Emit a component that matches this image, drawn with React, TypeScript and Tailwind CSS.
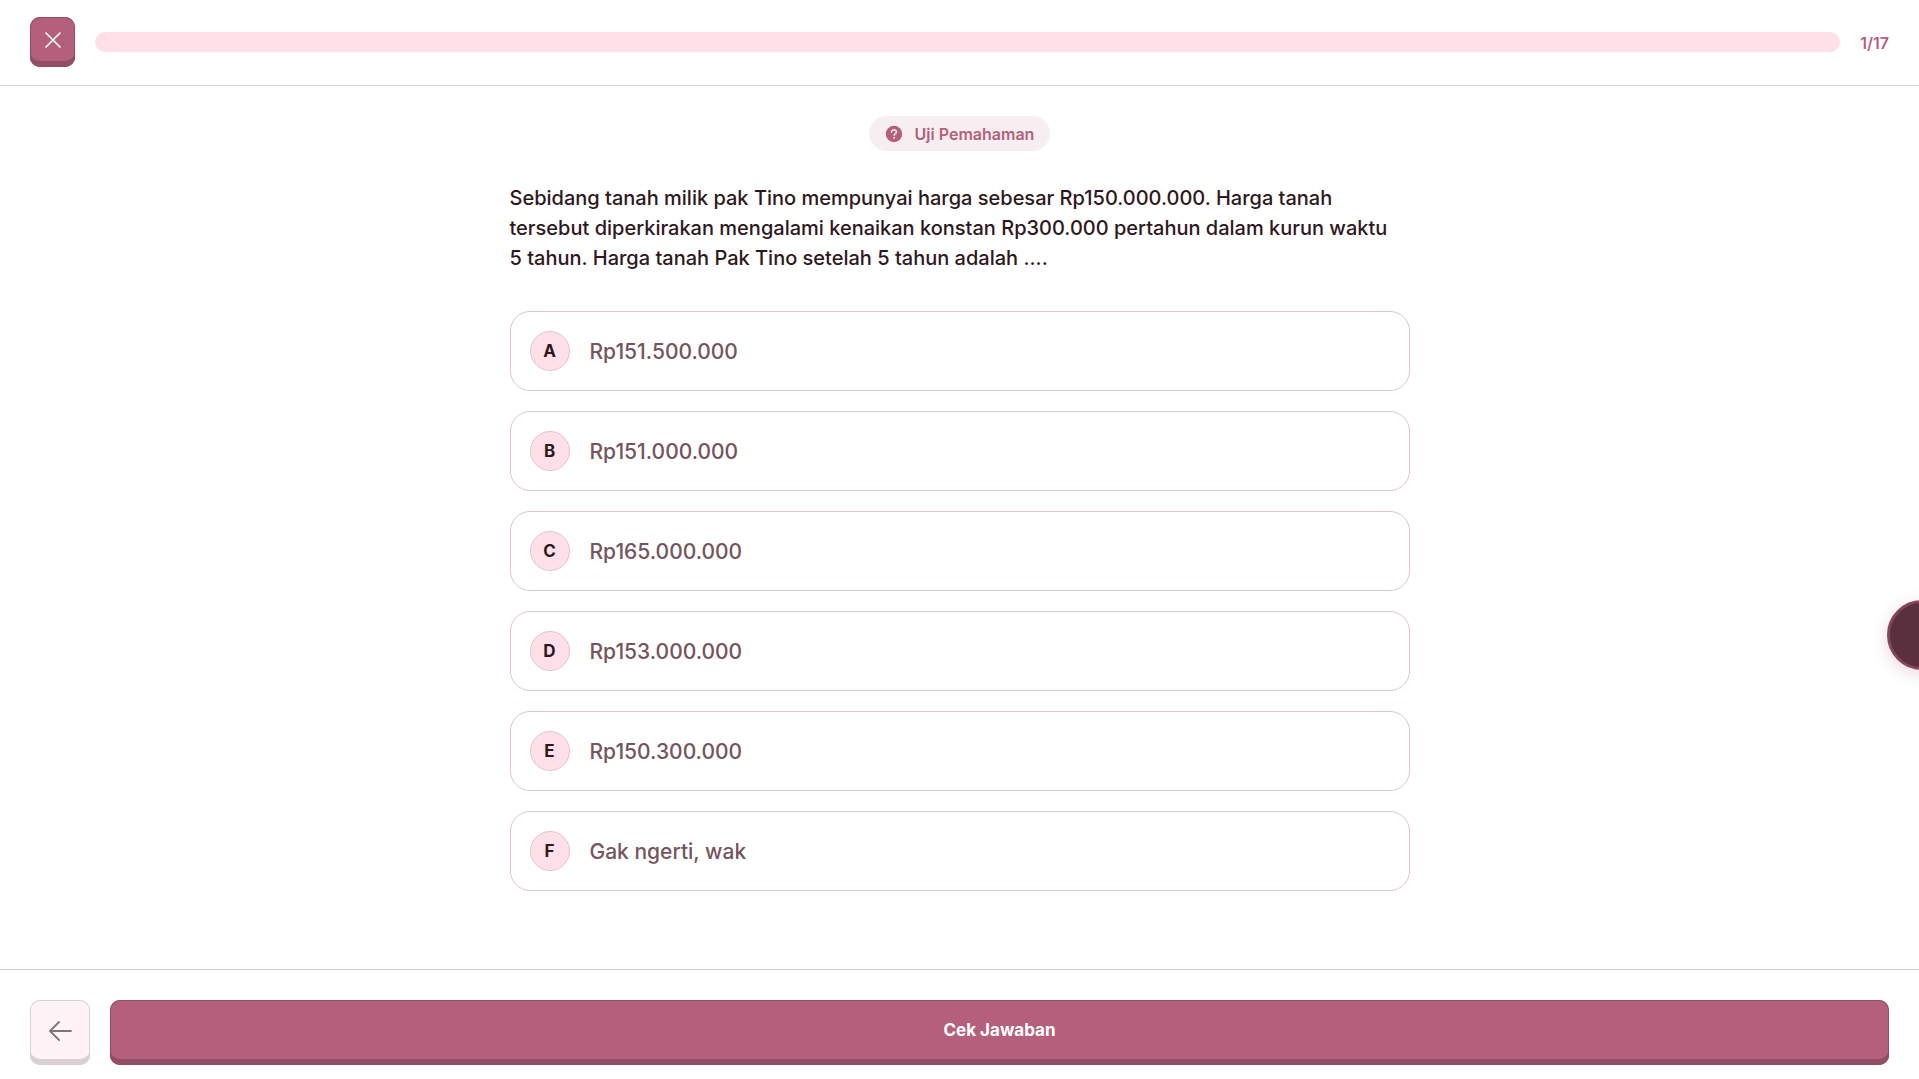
import { useState } from "react";

const options = [
  { id: "A", text: "Rp151.500.000" },
  { id: "B", text: "Rp151.000.000" },
  { id: "C", text: "Rp165.000.000" },
  { id: "D", text: "Rp153.000.000" },
  { id: "E", text: "Rp150.300.000" },
  { id: "F", text: "Gak ngerti, wak" },
];

function Header() {
  return (
    <header className="flex items-center gap-5 border-b border-[#d3d3d3] px-[30px] pt-[17px] pb-[18px]">
      <button
        type="button"
        aria-label="Tutup"
        className="flex h-[50px] w-[45px] shrink-0 items-center justify-center rounded-[10px] bg-[#b45f7b] pb-[5px] shadow-[inset_0_-6px_0_#914e64,inset_0_0_0_1px_#914e64]"
      >
        <svg width="16" height="16" viewBox="0 0 16 16" fill="none" stroke="#fff" strokeWidth="1.6" strokeLinecap="round" aria-hidden="true">
          <path d="M1 1 15 15M15 1 1 15" />
        </svg>
      </button>
      <div role="progressbar" aria-label="Kemajuan" aria-valuemin={0} aria-valuemax={17} aria-valuenow={0} className="h-5 flex-1 rounded-full bg-[#ffe0e8]" />
      <span className="pt-0.5 text-base leading-5 font-semibold text-[#b45f7b]">1/17</span>
    </header>
  );
}

function Topic() {
  return (
    <div className="flex h-[35px] items-center gap-3 rounded-full bg-[#f7eef1] px-4 text-[#b45f7b]">
      <svg width="18" height="18" viewBox="0 0 18 18" aria-hidden="true">
        <circle cx="9" cy="9" r="8.2" fill="currentColor" />
        <path d="M6.5 7.2C6.6 5.5 7.7 4.800 9 4.800s2.500.8 2.500 2.200c0 1.700-2.400 1.700-2.400 3.300" fill="none" stroke="#fff" strokeWidth="1.3" strokeLinecap="round" />
        <circle cx="9.1" cy="12.8" r=".9" fill="#fff" />
      </svg>
      <span className="text-base leading-5 font-semibold">Uji Pemahaman</span>
    </div>
  );
}

function Option({ id, text, checked, onSelect }: { id: string; text: string; checked: boolean; onSelect: () => void }) {
  return (
    <label className="flex h-20 cursor-pointer items-center gap-5 rounded-[20px] border border-[#e2c4ce] px-[19px] has-checked:bg-[#fff2f6]">
      <input type="radio" name="jawaban" value={id} checked={checked} onChange={onSelect} className="sr-only" />
      <span className="flex size-10 shrink-0 items-center justify-center rounded-full border border-[#e2c4ce] bg-[#ffe0e8] pt-0.5 text-[17px] font-bold text-[#2e1820]">
        {id}
      </span>
      <span className="pt-0.5 text-[21px] font-medium text-[#74545e]">{text}</span>
    </label>
  );
}

export default function App() {
  const [answer, setAnswer] = useState("");

  return (
    <div className="flex min-h-screen flex-col bg-white font-['Inter',sans-serif]">
      <Header />
      <main className="mx-auto flex w-full max-w-[900px] flex-1 flex-col items-center pt-[30px] pb-10">
        <Topic />
        <form id="soal" className="mt-8 w-full" onSubmit={(event) => event.preventDefault()}>
          <fieldset>
            <legend className="mb-[38px] text-xl leading-[30px] font-medium text-[#2e1820]">
              Sebidang tanah milik pak Tino mempunyai harga sebesar Rp150.000.000. Harga tanah tersebut diperkirakan mengalami kenaikan konstan Rp300.000 pertahun dalam kurun waktu 5&nbsp;tahun. Harga tanah Pak Tino setelah 5 tahun adalah ....
            </legend>
            <div className="flex flex-col gap-5">
              {options.map((option) => (
                <Option key={option.id} {...option} checked={answer === option.id} onSelect={() => setAnswer(option.id)} />
              ))}
            </div>
          </fieldset>
        </form>
      </main>
      <footer className="flex gap-5 border-t border-[#e2c4ce] px-[30px] pt-[30px] pb-[14px]">
        <button
          type="button"
          aria-label="Kembali"
          className="flex h-[65px] w-[60px] shrink-0 items-center justify-center rounded-[10px] bg-[#fff3f7] pb-1 shadow-[inset_0_-6px_0_#dad0d4,inset_0_0_0_1px_#dad0d4]"
        >
          <svg width="24" height="20" viewBox="0 0 24 20" fill="none" stroke="#7d7779" strokeWidth="1.8" strokeLinecap="round" strokeLinejoin="round" aria-hidden="true">
            <path d="M11 1 2 10 11 19M2 10H23" />
          </svg>
        </button>
        <button
          type="submit"
          form="soal"
          className="h-[65px] flex-1 rounded-[10px] bg-[#b45f7b] pb-1 text-[17px] font-bold text-white shadow-[inset_0_-6px_0_#914e64,inset_0_0_0_1px_#914e64]"
        >
          Cek Jawaban
        </button>
      </footer>
      <button
        type="button"
        aria-label="Bantuan"
        className="fixed top-[600px] -right-[38px] size-[70px] rounded-full border-[3px] border-[#85455d] bg-[#5a303f] shadow-[0_4px_16px_rgba(180,95,123,0.25)]"
      />
    </div>
  );
}
